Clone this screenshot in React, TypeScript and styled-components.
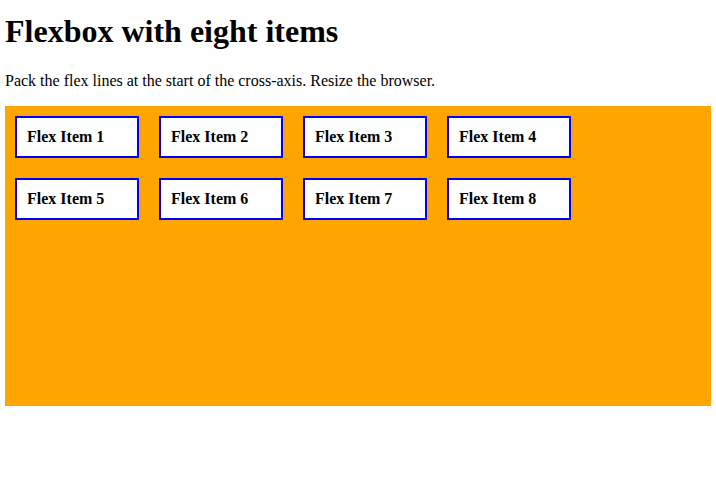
import styled, { createGlobalStyle } from 'styled-components'

const GlobalStyle = createGlobalStyle`
  body {
    margin: 5px;
    font-family: "Liberation Serif", "Times New Roman", serif;
    color: #000;
    background: #fff;
  }
`

const Title = styled.h1`
  font-size: 32px;
  font-weight: bold;
  margin: 8px 0 22px;
`

const Intro = styled.p`
  font-size: 16px;
  margin: 16px 0;
`

const FlexContainer = styled.div`
  display: flex;
  flex-wrap: wrap;
  align-content: flex-start;
  height: 300px;
  background-color: orange;
`

const FlexItem = styled.div`
  width: 100px;
  padding: 10px;
  margin: 10px;
  border: 2px solid blue;
  background-color: white;
  font-weight: bold;
  font-size: 16px;
`

const items = [1, 2, 3, 4, 5, 6, 7, 8]

function App() {
  return (
    <>
      <GlobalStyle />
      <Title>Flexbox with eight items</Title>
      <Intro>Pack the flex lines at the start of the cross-axis. Resize the browser.</Intro>
      <FlexContainer>
        {items.map((n) => (
          <FlexItem key={n}>Flex Item {n}</FlexItem>
        ))}
      </FlexContainer>
    </>
  )
}

export default App
